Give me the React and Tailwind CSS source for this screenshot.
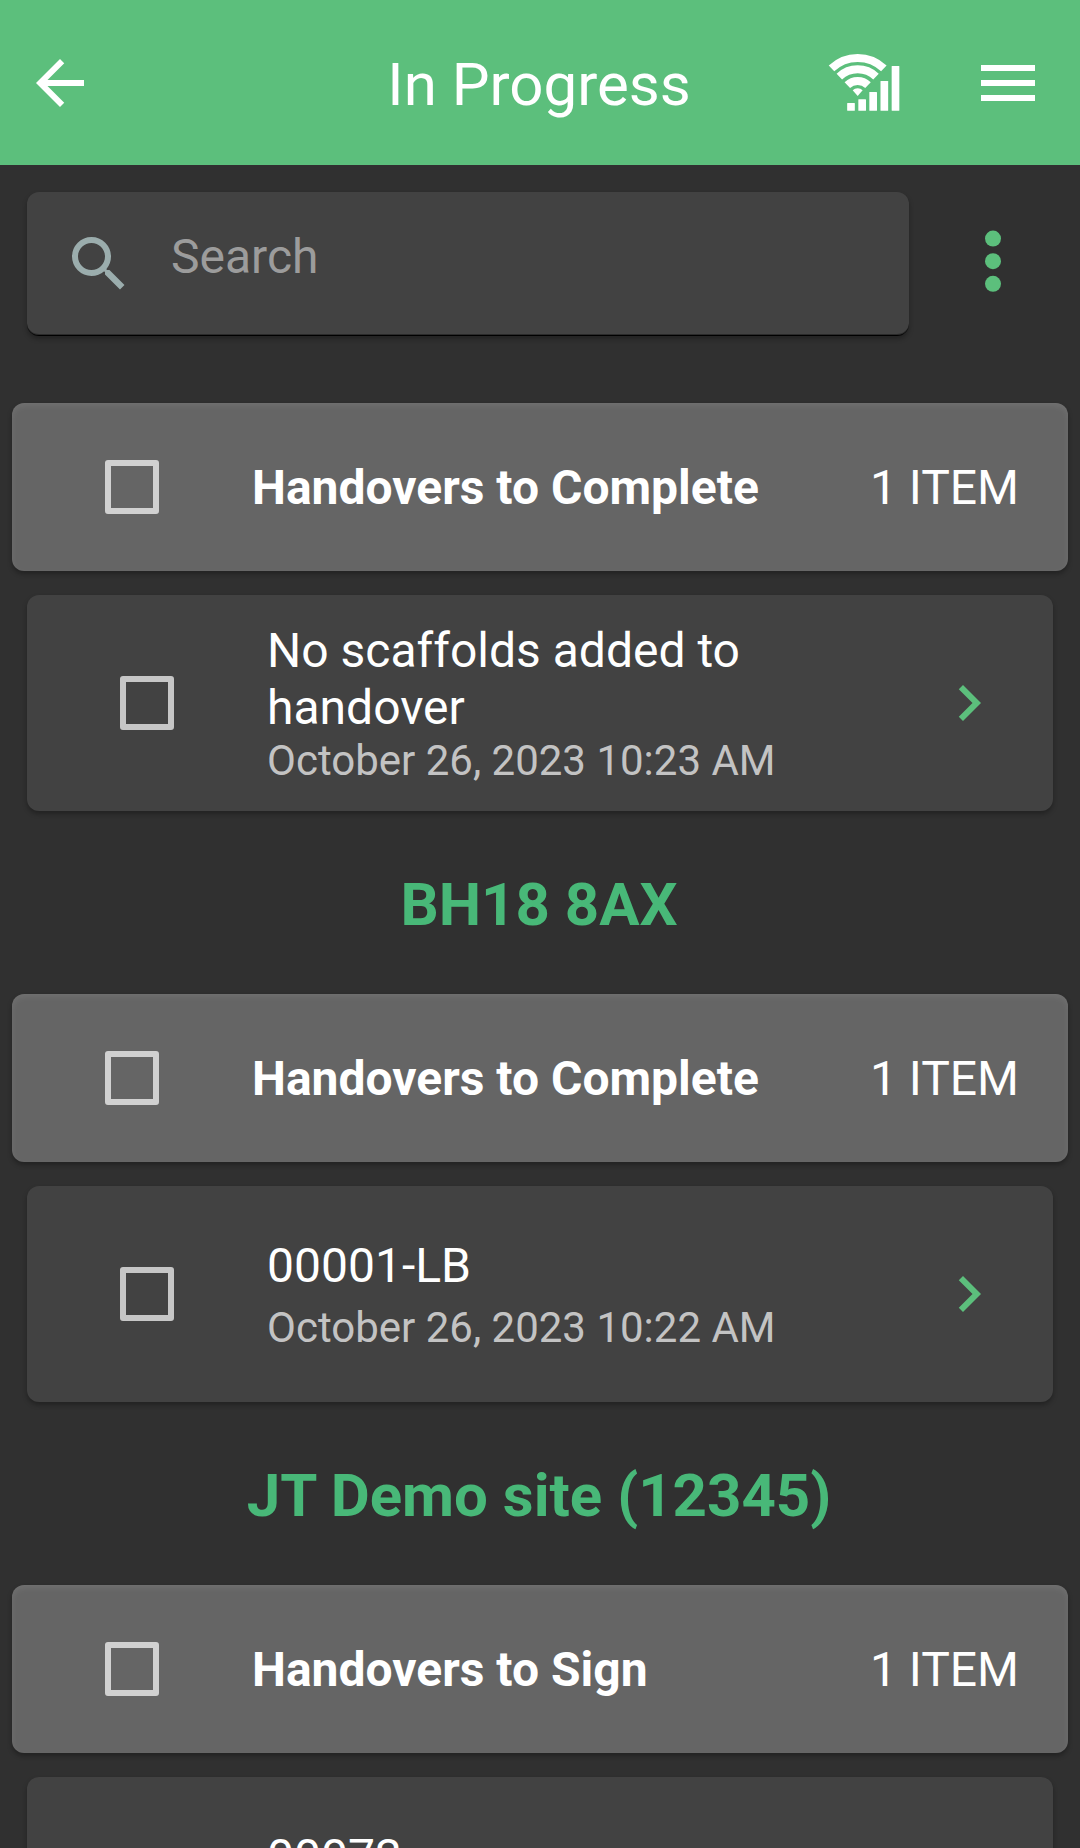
import { useState } from "react";
import { MdArrowBack, MdChevronRight, MdMenu, MdSearch } from "react-icons/md";

const groups = [
  {
    site: null,
    label: "Handovers to Complete",
    items: [
      {
        title: "No scaffolds added to handover",
        date: "October 26, 2023 10:23 AM",
        twoLines: true,
      },
    ],
  },
  {
    site: "BH18 8AX",
    label: "Handovers to Complete",
    items: [{ title: "00001-LB", date: "October 26, 2023 10:22 AM" }],
  },
  {
    site: "JT Demo site (12345)",
    label: "Handovers to Sign",
    items: [{ title: "00073", date: "" }],
  },
];

const SignalIcon = () => (
  <svg className="w-[72px] h-[60px]" viewBox="144 99 216 180" fill="none">
    <g stroke="currentColor" strokeWidth="24">
      <path d="M154.5 145.3A114 114 0 0 1 311.5 145.3" />
      <path d="M178 170A80 80 0 0 1 288 170" />
      <path d="M202 195.4A45 45 0 0 1 264 195.4" />
    </g>
    <path d="M218 211A22 22 0 0 1 248 211L233 228Z" fill="currentColor" />
    <g fill="currentColor">
      <rect x="201.5" y="249" width="23" height="23" rx="1.5" />
      <rect x="235" y="238" width="23" height="34" rx="1.5" />
      <rect x="268" y="216" width="23" height="56" rx="1.5" />
      <rect x="301.5" y="183" width="23" height="89" rx="1.5" />
      <rect x="335" y="138" width="23" height="134" rx="1.5" />
    </g>
  </svg>
);

const Checkbox = () => {
  const [checked, setChecked] = useState(false);

  return (
    <button
      type="button"
      role="checkbox"
      aria-checked={checked}
      onClick={() => setChecked(!checked)}
      className={`size-[54px] shrink-0 mx-[93px] rounded-[3px] border-6 border-white/70 ${
        checked ? "bg-[#5cbf7c]" : ""
      }`}
    />
  );
};

const Header = () => (
  <header className="grid grid-cols-[1fr_auto_1fr] items-center h-[165px] pt-px pl-6 pr-9 bg-[#5cbf7c] text-white">
    <MdArrowBack className="size-[72px]" />
    <h1 className="text-[60px] leading-[70px] pt-1 pl-2.5">In Progress</h1>
    <div className="flex items-center justify-end gap-[72px]">
      <SignalIcon />
      <MdMenu className="size-[72px]" />
    </div>
  </header>
);

const SearchBar = () => (
  <div className="flex items-center pt-[27px] pl-[27px]">
    <div className="flex items-center w-[882px] h-36 pl-9 rounded-xl border-b border-black bg-[#424242] shadow-[0_3px_5px_rgba(0,0,0,0.3),inset_0_-1px_0_#2a2a2a]">
      <MdSearch className="size-[72px] text-[#9badad]" />
      <input
        type="text"
        placeholder="Search"
        className="flex-1 ml-9 mb-3.5 h-16 text-[48px] outline-none placeholder:text-[#9c9c9c]"
      />
    </div>
    <svg
      className="w-[18px] h-[66px] ml-[75px] -mt-1.5 text-[#5cbf7c]"
      viewBox="0 0 18 66"
      fill="currentColor"
    >
      <circle cx="9" cy="10.6" r="8" />
      <circle cx="9" cy="33.2" r="8" />
      <circle cx="9" cy="55.8" r="8" />
    </svg>
  </div>
);

const GroupCard = ({ label, count }) => (
  <div className="flex items-center h-[168px] mx-3 pr-[49px] rounded-xl bg-[#656565] text-[48px] shadow-[0_3px_5px_rgba(0,0,0,0.3),inset_0_3px_6px_rgba(255,255,255,0.08)]">
    <Checkbox />
    <span className="flex-1 pt-0.5 font-bold">{label}</span>
    <span className="pt-0.5">{count} ITEM</span>
  </div>
);

const ItemCard = ({ item }) => (
  <div className="flex items-center h-[216px] mt-6 mx-[27px] pr-12 rounded-xl bg-[#424242] shadow-[0_3px_5px_rgba(0,0,0,0.3)]">
    <Checkbox />
    <div
      className={`flex-1 self-start ${item.twoLines ? "pt-[27px]" : "pt-[51px]"}`}
    >
      <p className="text-[48px] leading-[57px]">{item.title}</p>
      <p
        className={`text-[42px] leading-[50px] text-white/70 ${
          item.twoLines ? "" : "mt-[9px]"
        }`}
      >
        {item.date}
      </p>
    </div>
    <MdChevronRight className="size-[72px] ml-12 text-[#5cbf7c]" />
  </div>
);

const App = () => {
  return (
    <div className="h-screen overflow-hidden bg-[#303030] text-white font-['Roboto',sans-serif]">
      <Header />
      <SearchBar />
      <main className="pt-[67px]">
        {groups.map((group, index) => (
          <section key={index}>
            {group.site && (
              <h2 className="h-[183px] pt-[59px] pr-0.5 text-center text-[60px] leading-[70px] font-bold text-[#48b878]">
                {group.site}
              </h2>
            )}
            <GroupCard label={group.label} count={group.items.length} />
            {group.items.map((item) => (
              <ItemCard key={item.title} item={item} />
            ))}
          </section>
        ))}
      </main>
    </div>
  );
};

export default App;
